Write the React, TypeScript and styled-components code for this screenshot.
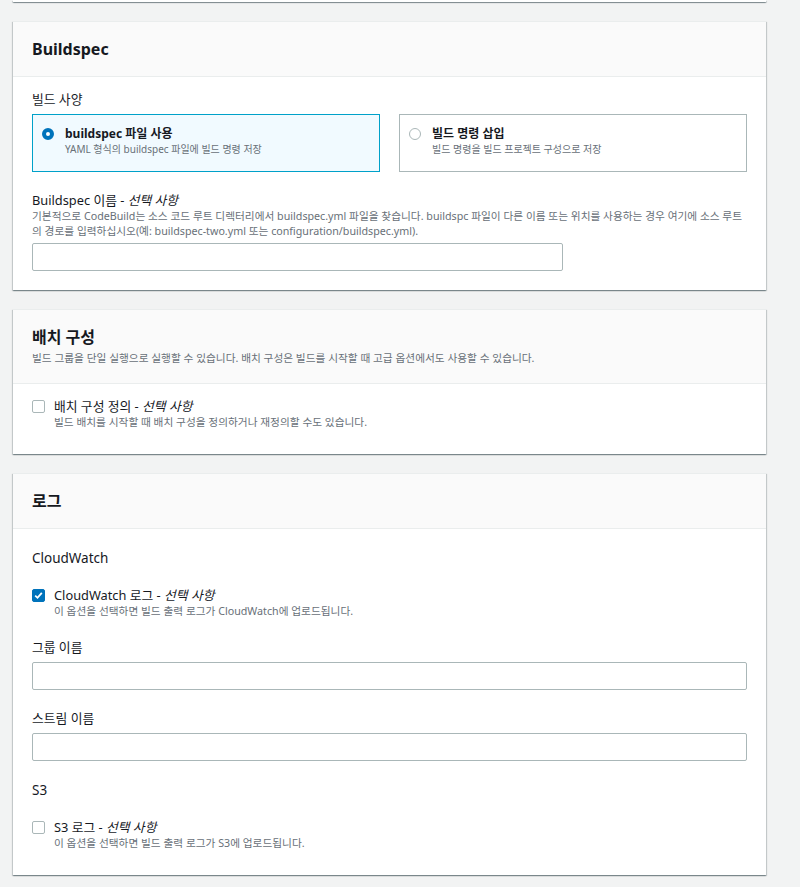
import React from "react";
import styled, { createGlobalStyle } from "styled-components";

const GlobalStyle = createGlobalStyle`
  body {
    margin: 0;
    background: #f2f3f3;
    font-family: "Noto Sans", "Noto Sans CJK KR", sans-serif;
    color: #16191f;
  }
`;

const Page = styled.div`
  display: flex;
  flex-direction: column;
  gap: 19px;
  width: 753px;
  padding: 0 0 13px 13px;
`;

const cardShadow = `
  box-shadow: 0 1px 1px 0 rgba(0, 28, 36, 0.3), 1px 1px 1px 0 rgba(0, 28, 36, 0.15),
    -1px 1px 1px 0 rgba(0, 28, 36, 0.15);
`;

const PrevCardEdge = styled.div`
  height: 2px;
  background: #fff;
  ${cardShadow}
`;

const Card = styled.section`
  background: #fff;
  border-top: 1px solid #eaeded;
  ${cardShadow}
`;

const CardHeader = styled.header`
  background: #fafafa;
  border-bottom: 1px solid #eaeded;
  padding: 17px 19px;
`;

const CardTitle = styled.h2`
  margin: 0;
  font-size: 16px;
  line-height: 20px;
  font-weight: 700;
`;

const HeaderDesc = styled.p`
  margin: 4px 0 0;
  font-size: 10.7px;
  line-height: 15px;
  color: #687078;
`;

const CardBody = styled.div`
  display: flex;
  flex-direction: column;
  gap: 20px;
  padding: 14px 19px 19px;
`;

const Field = styled.div`
  display: flex;
  flex-direction: column;
`;

const Label = styled.label`
  font-size: 12.8px;
  line-height: 17px;
  em {
    font-style: italic;
  }
`;

const Desc = styled.div`
  font-size: 10.7px;
  line-height: 15px;
  color: #687078;
`;

const Control = styled.div`
  margin-top: 6px;
`;

const DescControl = styled.div`
  margin-top: 4px;
`;

const SubHeading = styled.h3`
  margin: 0;
  font-size: 13.5px;
  line-height: 18px;
  font-weight: 400;
  &:first-child {
    margin-top: 6px;
  }
`;

const TextInput = styled.input<{ $width?: number }>`
  display: block;
  box-sizing: border-box;
  width: ${(p) => (p.$width ? `${p.$width}px` : "100%")};
  height: 28px;
  border: 1px solid #aab7b8;
  border-radius: 2px;
  background: #fff;
  font: inherit;
  font-size: 12px;
  padding: 0 8px;
  outline: none;
`;

const TileRow = styled.div`
  display: grid;
  grid-template-columns: 1fr 1fr;
  gap: 19px;
`;

const Tile = styled.div<{ $selected?: boolean }>`
  display: flex;
  gap: 11px;
  height: 58px;
  box-sizing: border-box;
  padding: 11px 9px 0;
  border: 1px solid ${(p) => (p.$selected ? "#00a1c9" : "#aab7b8")};
  background: ${(p) => (p.$selected ? "#f1faff" : "#fff")};
`;

const Radio = styled.span<{ $checked?: boolean }>`
  flex: none;
  box-sizing: border-box;
  width: 12px;
  height: 12px;
  margin-top: 2px;
  border-radius: 50%;
  background: #fff;
  border: ${(p) => (p.$checked ? "4px solid #0073bb" : "1px solid #aab7b8")};
`;

const TileText = styled.div`
  display: flex;
  flex-direction: column;
`;

const TileLabel = styled.div`
  font-size: 12px;
  line-height: 16px;
  font-weight: 700;
`;

const TileDesc = styled(Desc)`
  font-size: 10px;
`;

const CheckField = styled.div`
  display: flex;
  gap: 9px;
  &:last-child {
    padding-bottom: 5px;
  }
`;

const Box = styled.span<{ $checked?: boolean }>`
  flex: none;
  box-sizing: border-box;
  width: 13px;
  height: 13px;
  margin-top: 2px;
  border-radius: 2px;
  border: 1px solid ${(p) => (p.$checked ? "#0073bb" : "#aab7b8")};
  background: ${(p) => (p.$checked ? "#0073bb" : "#fff")};
  display: flex;
  align-items: center;
  justify-content: center;
`;

const Optional = () => (
  <>
    {" - "}
    <em>선택 사항</em>
  </>
);

const Checkbox = ({ checked, label, desc }: { checked?: boolean; label: React.ReactNode; desc: string }) => (
  <CheckField>
    <Box $checked={checked}>
      {checked && (
        <svg width="9" height="9" viewBox="0 0 9 9">
          <path d="M1.2 4.6 L3.5 6.8 L7.8 1.8" fill="none" stroke="#fff" strokeWidth="1.8" />
        </svg>
      )}
    </Box>
    <TileText>
      <Label>{label}</Label>
      <Desc>{desc}</Desc>
    </TileText>
  </CheckField>
);

export default function App() {
  return (
    <>
      <GlobalStyle />
      <Page>
        <PrevCardEdge />

        <Card>
          <CardHeader>
            <CardTitle>Buildspec</CardTitle>
          </CardHeader>
          <CardBody>
            <Field>
              <Label>빌드 사양</Label>
              <Control>
                <TileRow>
                  <Tile $selected>
                    <Radio $checked />
                    <TileText>
                      <TileLabel>buildspec 파일 사용</TileLabel>
                      <TileDesc>YAML 형식의 buildspec 파일에 빌드 명령 저장</TileDesc>
                    </TileText>
                  </Tile>
                  <Tile>
                    <Radio />
                    <TileText>
                      <TileLabel>빌드 명령 삽입</TileLabel>
                      <TileDesc>빌드 명령을 빌드 프로젝트 구성으로 저장</TileDesc>
                    </TileText>
                  </Tile>
                </TileRow>
              </Control>
            </Field>
            <Field>
              <Label>
                Buildspec 이름<Optional />
              </Label>
              <Desc>
                기본적으로 CodeBuild는 소스 코드 루트 디렉터리에서 buildspec.yml 파일을 찾습니다. buildspc 파일이 다른 이름 또는
                위치를 사용하는 경우 여기에 소스 루트
                <br />의 경로를 입력하십시오(예: buildspec-two.yml 또는 configuration/buildspec.yml).
              </Desc>
              <DescControl>
                <TextInput $width={531} />
              </DescControl>
            </Field>
          </CardBody>
        </Card>

        <Card>
          <CardHeader>
            <CardTitle>배치 구성</CardTitle>
            <HeaderDesc>
              빌드 그룹을 단일 실행으로 실행할 수 있습니다. 배치 구성은 빌드를 시작할 때 고급 옵션에서도 사용할 수 있습니다.
            </HeaderDesc>
          </CardHeader>
          <CardBody>
            <Checkbox
              label={
                <>
                  배치 구성 정의<Optional />
                </>
              }
              desc="빌드 배치를 시작할 때 배치 구성을 정의하거나 재정의할 수도 있습니다."
            />
          </CardBody>
        </Card>

        <Card>
          <CardHeader>
            <CardTitle>로그</CardTitle>
          </CardHeader>
          <CardBody>
            <SubHeading>CloudWatch</SubHeading>
            <Checkbox
              checked
              label={
                <>
                  CloudWatch 로그<Optional />
                </>
              }
              desc="이 옵션을 선택하면 빌드 출력 로그가 CloudWatch에 업로드됩니다."
            />
            <Field>
              <Label>그룹 이름</Label>
              <Control>
                <TextInput />
              </Control>
            </Field>
            <Field>
              <Label>스트림 이름</Label>
              <Control>
                <TextInput />
              </Control>
            </Field>
            <SubHeading>S3</SubHeading>
            <Checkbox
              label={
                <>
                  S3 로그<Optional />
                </>
              }
              desc="이 옵션을 선택하면 빌드 출력 로그가 S3에 업로드됩니다."
            />
          </CardBody>
        </Card>
      </Page>
    </>
  );
}
